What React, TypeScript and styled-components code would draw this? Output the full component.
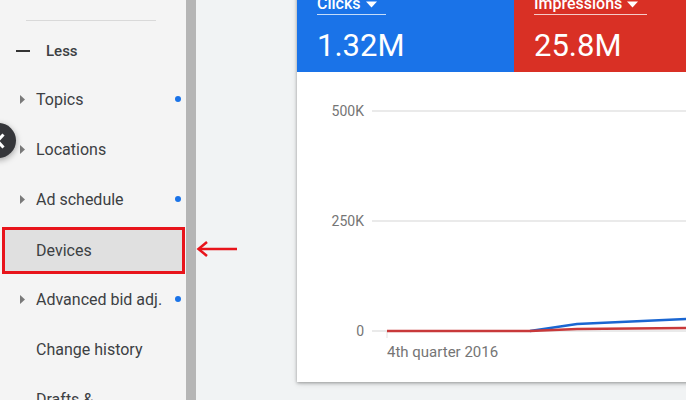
import React from 'react';
import styled, {createGlobalStyle} from 'styled-components';

const GlobalStyle = createGlobalStyle`
  html, body {
    margin: 0;
    padding: 0;
    background: #f1f3f4;
    font-family: Roboto, "Liberation Sans", sans-serif;
    overflow: hidden;
  }
`

const Page = styled.div`
  position: relative;
  display: flex;
  width: 686px;
  height: 400px;
  overflow: hidden;
  background: #f1f3f4;
`

const Sidebar = styled.nav`
  width: 186px;
  flex-shrink: 0;
  background: #f4f4f4;
  padding-top: 20px;
  box-sizing: border-box;
`

const Scrollbar = styled.div`
  width: 10px;
  flex-shrink: 0;
  background: #b5b5b5;
`

const Divider = styled.div`
  height: 1px;
  margin: 0 30px 0 26px;
  background: #d9d9d9;
`

const LessRow = styled.div`
  height: 53px;
  padding: 6px 0 0 16px;
  box-sizing: border-box;
  display: flex;
  align-items: center;
  gap: 16px;
  font-size: 15px;
  font-weight: 500;
  color: #3c4043;
`

const Minus = styled.span`
  width: 14px;
  height: 2px;
  background: #333;
`

const Item = styled.div<{ $selected?: boolean }>`
  height: 50px;
  display: flex;
  align-items: center;
  padding: 0 5px 0 20px;
  box-sizing: border-box;
  font-size: 16px;
  color: #3c4043;
  ${p => p.$selected && `
    height: 47px;
    margin: 3px 1px 0 2px;
    padding-left: 15px;
    background: #e0e0e0;
    border: 3px solid #e8141b;
  `}
`

const Caret = styled.span`
  width: 16px;
  flex-shrink: 0;
  display: flex;
  align-items: center;
`

const Label = styled.span`
  flex: 1;
  white-space: nowrap;
`

const Dot = styled.span`
  width: 6px;
  height: 6px;
  border-radius: 50%;
  background: #1a73e8;
`

const CollapseButton = styled.div`
  position: absolute;
  left: -19px;
  top: 123px;
  width: 35px;
  height: 35px;
  border-radius: 50%;
  background: #35363a;
  box-shadow: 0 2px 6px rgba(0, 0, 0, .35);
  display: flex;
  align-items: center;
  justify-content: flex-end;
  padding-right: 11px;
  box-sizing: border-box;
`

const Pointer = styled.svg`
  position: absolute;
  left: 196px;
  top: 240px;
`

const Main = styled.main`
  flex: 1;
  padding-left: 101px;
  overflow: hidden;
`

const Card = styled.section`
  margin-top: -20px;
  width: 520px;
  background: #fff;
  box-shadow: 0 1px 3px rgba(0, 0, 0, .3), 0 2px 6px rgba(0, 0, 0, .12);
`

const Metrics = styled.div`
  display: flex;
`

const Metric = styled.div<{ $color: string; $width?: number }>`
  background: ${p => p.$color};
  ${p => p.$width ? `width: ${p.$width}px;` : 'flex: 1;'}
  padding: 14px 20px 8px;
  box-sizing: border-box;
  color: #fff;
`

const MetricName = styled.div`
  display: inline-flex;
  align-items: center;
  gap: 5px;
  padding-right: 9px;
  line-height: 20px;
  font-size: 16px;
  font-weight: 500;
  border-bottom: 1px solid rgba(255, 255, 255, .75);
`

const MetricValue = styled.div`
  margin-top: 13px;
  font-size: 31px;
  line-height: 36px;
`

const ChartBody = styled.div`
  padding: 31px 0 22px;
`

const ChartRow = styled.div`
  display: flex;
  gap: 8px;
`

const YAxis = styled.div`
  width: 67px;
  height: 236px;
  display: flex;
  flex-direction: column;
  justify-content: space-between;
  align-items: flex-end;
  font-size: 14px;
  line-height: 16px;
  color: #757575;
`

const XLabel = styled.div`
  margin: 5px 0 0 90px;
  font-size: 15px;
  line-height: 16px;
  color: #757575;
`

const CaretDown = () => (
    <svg width="11" height="7" viewBox="0 0 11 7">
        <path d="M0 0.5 L11 0.5 L5.5 6.5 Z" fill="#fff"/>
    </svg>
)

const items = [
    {name: 'Topics', arrow: true, dot: true},
    {name: 'Locations', arrow: true},
    {name: 'Ad schedule', arrow: true, dot: true},
    {name: 'Devices', selected: true},
    {name: 'Advanced bid adj.', arrow: true, dot: true},
    {name: 'Change history'},
    {name: 'Drafts &'},
]

const App = () => {
    return (
        <Page>
            <GlobalStyle/>
            <Sidebar>
                <Divider/>
                <LessRow><Minus/>Less</LessRow>
                {items.map(it => (
                    <Item key={it.name} $selected={it.selected}>
                        <Caret>
                            {it.arrow && (
                                <svg width="5" height="9" viewBox="0 0 5 9">
                                    <path d="M0 0 L5 4.5 L0 9 Z" fill="#7a7a7a"/>
                                </svg>
                            )}
                        </Caret>
                        <Label>{it.name}</Label>
                        {it.dot && <Dot/>}
                    </Item>
                ))}
            </Sidebar>
            <Scrollbar/>
            <Main>
                <Card>
                    <Metrics>
                        <Metric $color="#1a73e8" $width={217}>
                            <MetricName>Clicks <CaretDown/></MetricName>
                            <MetricValue>1.32M</MetricValue>
                        </Metric>
                        <Metric $color="#d93025">
                            <MetricName>Impressions <CaretDown/></MetricName>
                            <MetricValue>25.8M</MetricValue>
                        </Metric>
                    </Metrics>
                    <ChartBody>
                        <ChartRow>
                            <YAxis>
                                <span>500K</span>
                                <span>250K</span>
                                <span>0</span>
                            </YAxis>
                            <svg width="440" height="236" viewBox="0 0 440 236">
                                <line x1="0" y1="8" x2="440" y2="8" stroke="#e3e3e3" strokeWidth="1.5"/>
                                <line x1="0" y1="118" x2="440" y2="118" stroke="#e3e3e3" strokeWidth="1.5"/>
                                <line x1="0" y1="228" x2="440" y2="228" stroke="#e3e3e3" strokeWidth="1.5"/>
                                <line x1="15" y1="228" x2="15" y2="235" stroke="#e3e3e3" strokeWidth="1"/>
                                <polyline points="158,228 205,221 314,216 440,212" fill="none" stroke="#1a66d1"
                                          strokeWidth="2.5"/>
                                <polyline points="15,228 158,228 205,226 314,225 440,224" fill="none" stroke="#c8393a"
                                          strokeWidth="2.5"/>
                            </svg>
                        </ChartRow>
                        <XLabel>4th quarter 2016</XLabel>
                    </ChartBody>
                </Card>
            </Main>
            <CollapseButton>
                <svg width="10" height="16" viewBox="0 0 10 16">
                    <path d="M8.5 1.5 L2.5 8 L8.5 14.5" fill="none" stroke="#fff" strokeWidth="3"/>
                </svg>
            </CollapseButton>
            <Pointer width="44" height="18" viewBox="0 0 44 18">
                <line x1="3" y1="9" x2="41" y2="9" stroke="#e8141b" strokeWidth="2.5"/>
                <path d="M11 2 L2.5 9 L11 16" fill="none" stroke="#e8141b" strokeWidth="2.5"/>
            </Pointer>
        </Page>
    );
}

export default App;
